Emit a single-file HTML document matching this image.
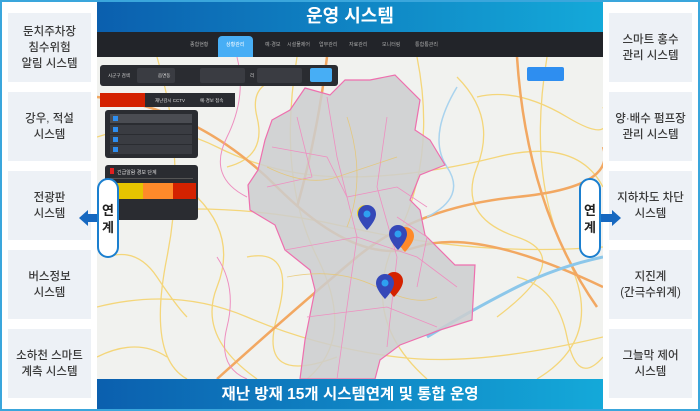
<!DOCTYPE html>
<html><head><meta charset="utf-8"><style>
*{margin:0;padding:0;box-sizing:border-box}
body{width:700px;height:411px;overflow:hidden;background:#fff;font-family:"Liberation Sans","Noto Sans CJK KR",sans-serif;position:relative}
.frame{position:absolute;left:0;top:0;width:700px;height:411px;border:2px solid #3aa6dc}
.side{position:absolute;top:0;width:97px;height:411px;background:#fff}
.box{position:absolute;width:83px;height:69px;background:#edf1f6;display:flex;align-items:center;justify-content:center;text-align:center;font-size:11.5px;line-height:16px;color:#3a3a3a;font-weight:500}
.hdr{position:absolute;left:97px;top:0;width:506px;height:32px;background:linear-gradient(90deg,#0b5fae,#14a9d9);color:#fff;font-size:18px;font-weight:bold;text-align:center;line-height:32px}
.nav{position:absolute;left:97px;top:32px;width:506px;height:25px;background:#222429;color:#aaa;font-size:5px}
.nav span{position:absolute;top:9px}
.map{position:absolute;left:97px;top:57px;width:506px;height:322px;background:#f1f2ef;overflow:hidden}
.ftr{position:absolute;left:97px;top:379px;width:506px;height:32px;background:linear-gradient(90deg,#0b5fae,#14a9d9);color:#fff;font-size:15.5px;font-weight:bold;text-align:center;line-height:32px}
.pill{position:absolute;top:178px;width:22px;height:80px;background:#fff;border:2px solid #1b7fcf;border-radius:11px;font-size:13px;font-weight:bold;color:#222;text-align:center;line-height:17px;padding-top:22px}
.panel{position:absolute;background:#2a2c31;border-radius:3px;font-size:4.5px;color:#ddd}
.row{position:absolute;left:5px;width:82px;height:9px;background:#3a3c42}
.cb{position:absolute;left:3px;top:2px;width:5px;height:5px;background:#2e8ef0}
</style></head><body>
<div class="hdr">운영 시스템</div>
<div class="nav">
<span style="left:93px">종합현황</span>
<div style="position:absolute;left:121px;top:4px;width:35px;height:21px;background:#47aef5;border-radius:4px 4px 0 0"></div>
<span style="left:129px;color:#fff">상황관리</span>
<span style="left:168px">예·경보</span><span style="left:190px">시설물제어</span><span style="left:222px">업무관리</span><span style="left:252px">자료관리</span><span style="left:285px">모니터링</span><span style="left:318px">통합통관리</span>
</div>
<div class="map">
<svg width="506" height="322" style="position:absolute;left:0;top:0">
<g fill="none" stroke="#f4d67a" stroke-width="1.3">
<path d="M0 80 Q60 60 120 90 T250 120 T400 100 T506 130"/>
<path d="M0 250 Q80 230 150 260 T300 300 T506 280"/>
<path d="M60 0 Q90 100 70 200 T90 322"/>
<path d="M200 0 Q180 120 220 200 T210 322"/>
<path d="M320 0 Q340 100 300 180 T330 322"/>
<path d="M450 0 Q430 120 470 200 T440 322"/>
<path d="M0 160 Q120 140 250 170 T506 190"/>
<path d="M100 140 Q140 180 120 230 T160 322"/>
<path d="M150 200 Q200 190 180 260 T240 300"/>
<path d="M360 20 Q400 60 380 110 T420 180 T400 260"/>
<path d="M0 300 Q40 280 70 300"/>
<path d="M380 40 Q420 30 470 60 T506 50"/>
<path d="M130 110 Q170 100 160 60 T200 20"/>
<path d="M420 220 Q460 230 470 280 T506 300"/>
<path d="M10 200 Q40 190 60 220 T90 260"/>
</g>
<g fill="none" stroke="#f2a862" stroke-width="2.5">
<path d="M0 40 Q100 50 180 130 T320 190 T506 230"/>
<path d="M120 322 Q200 250 260 200 T420 140 T506 90"/>
<path d="M420 0 Q430 150 500 250"/>
<path d="M230 0 Q220 80 200 150"/>
</g>
<path d="M330 280 Q380 250 420 230 T506 200" stroke="#8cc7ea" stroke-width="3" fill="none"/>
<path d="M360 30 Q330 80 350 110 T330 160" stroke="#a9d3ee" stroke-width="1.5" fill="none"/>
<g fill="none" stroke="#ee8fc0" stroke-width="1">
<path d="M140 0 Q150 40 130 80 T150 140"/><path d="M120 200 Q140 230 130 270 T150 322"/>
</g>
<path d="M273 23 L298 18 L323 43 L318 73 L333 83 L348 108 L323 118 L313 143 L323 153 L328 178 L358 208 L378 208 L375 263 L343 273 L303 288 L283 303 L278 322 L203 322 L208 283 L218 233 L213 213 L188 193 L178 168 L153 153 L151 128 L161 113 L168 83 L175 63 L193 53 L208 31 L233 38 L248 23 Z" fill="#cdcecf" fill-opacity=".85" stroke="#ee6fae" stroke-width="1.2"/>
<g fill="none" stroke="#ee8fc0" stroke-width=".8">
<path d="M175 90 L230 100 L250 140 L300 130 L330 150"/><path d="M230 40 L240 100 L260 180 L250 250 L240 322"/><path d="M188 193 L260 180 L320 200 L360 230"/><path d="M210 260 L290 250 L340 270"/><path d="M290 60 L280 130 L300 200 L290 290"/>
<path d="M200 60 L215 120 L170 130"/><path d="M300 160 L330 180 L320 230"/>
</g>
<g fill="none" stroke="#e8c56a" stroke-width=".8" opacity=".8">
<path d="M170 110 Q210 130 240 120 T300 100"/><path d="M190 220 Q240 210 280 230 T340 240"/><path d="M250 60 Q270 120 250 170"/>
</g>
<g>
<circle cx="268" cy="156" r="8" fill="#f2d21a"/>
<path d="M270 148a9 9 0 0 1 9 9c0 7-9 16-9 16s-9-9-9-16a9 9 0 0 1 9-9z" fill="#3548b8"/><circle cx="270" cy="157" r="3.5" fill="#2ea0f0"/>
<path d="M308 170a9 9 0 0 1 9 9c0 7-9 16-9 16s-9-9-9-16a9 9 0 0 1 9-9z" fill="#ff8a2a"/>
<path d="M301 168a9 9 0 0 1 9 9c0 7-9 16-9 16s-9-9-9-16a9 9 0 0 1 9-9z" fill="#3548b8"/><circle cx="301" cy="177" r="3.5" fill="#2ea0f0"/>
<path d="M297 215a9 9 0 0 1 9 9c0 7-9 16-9 16s-9-9-9-16a9 9 0 0 1 9-9z" fill="#d42200"/>
<path d="M288 217a9 9 0 0 1 9 9c0 7-9 16-9 16s-9-9-9-16a9 9 0 0 1 9-9z" fill="#3548b8"/><circle cx="288" cy="226" r="3.5" fill="#2ea0f0"/>
</g>
</svg>
<div class="panel" style="left:3px;top:8px;width:238px;height:21px">
<span style="position:absolute;left:8px;top:8px">시군구 검색</span>
<div style="position:absolute;left:37px;top:3px;width:38px;height:15px;background:#3a3c42;border-radius:2px"></div>
<span style="position:absolute;left:58px;top:8px">읍면동</span>
<div style="position:absolute;left:100px;top:3px;width:45px;height:15px;background:#3a3c42;border-radius:2px"></div>
<span style="position:absolute;left:150px;top:8px">리</span>
<div style="position:absolute;left:157px;top:3px;width:45px;height:15px;background:#3a3c42;border-radius:2px"></div>
<div style="position:absolute;left:210px;top:3px;width:22px;height:14px;background:#47aef5;border-radius:2px"></div>
</div>
<div class="panel" style="left:3px;top:36px;width:135px;height:14px;border-radius:0">
<div style="width:45px;height:14px;background:#d42200"></div>
<span style="position:absolute;left:55px;top:5px">재난감시 CCTV</span><span style="position:absolute;left:100px;top:5px">예·경보 접속</span></div>
<div class="panel" style="left:8px;top:53px;width:93px;height:48px">
<div class="row" style="top:4px;background:#4a4c52"><div class="cb"></div></div>
<div class="row" style="top:15px"><div class="cb"></div></div>
<div class="row" style="top:25px"><div class="cb"></div></div>
<div class="row" style="top:35px"><div class="cb"></div></div>
</div>
<div class="panel" style="left:8px;top:108px;width:93px;height:55px">
<div style="position:absolute;left:5px;top:3px;width:4px;height:6px;background:#e02020"></div>
<span style="position:absolute;left:12px;top:4px;font-size:5px">긴급알람 경보 단계</span>
<div style="position:absolute;left:5px;top:13px;width:83px;height:1px;background:#555"></div>
<div style="position:absolute;left:10px;top:18px;width:28px;height:16px;background:#e6c400"></div>
<div style="position:absolute;left:38px;top:18px;width:30px;height:16px;background:#ff8a2a"></div>
<div style="position:absolute;left:68px;top:18px;width:23px;height:16px;background:#d42200"></div>
</div>
<div style="position:absolute;left:430px;top:10px;width:37px;height:14px;background:#2e8ef0;border-radius:2px"></div>
</div>
<div class="ftr">재난 방재 15개 시스템연계 및 통합 운영</div>
<div class="side" style="left:0"></div>
<div class="side" style="left:603px"></div>
<div class="box" style="left:8px;top:13px">둔치주차장<br>침수위험<br>알림 시스템</div>
<div class="box" style="left:8px;top:92px">강우, 적설<br>시스템</div>
<div class="box" style="left:8px;top:171px">전광판<br>시스템</div>
<div class="box" style="left:8px;top:250px">버스정보<br>시스템</div>
<div class="box" style="left:8px;top:329px">소하천 스마트<br>계측 시스템</div>
<div class="box" style="left:609px;top:13px">스마트 홍수<br>관리 시스템</div>
<div class="box" style="left:609px;top:92px">양·배수 펌프장<br>관리 시스템</div>
<div class="box" style="left:609px;top:171px">지하차도 차단<br>시스템</div>
<div class="box" style="left:609px;top:250px">지진계<br>(간극수위계)</div>
<div class="box" style="left:609px;top:329px">그늘막 제어<br>시스템</div>
<svg style="position:absolute;left:79px;top:210px" width="20" height="16"><path d="M0 8 L9 0 V4 H20 V12 H9 V16 Z" fill="#1668c0"/></svg>
<svg style="position:absolute;left:601px;top:210px" width="20" height="16"><path d="M20 8 L11 0 V4 H0 V12 H11 V16 Z" fill="#1668c0"/></svg>
<div class="pill" style="left:97px">연<br>계</div>
<div class="pill" style="left:579px">연<br>계</div>
<div class="frame"></div>
</body></html>
